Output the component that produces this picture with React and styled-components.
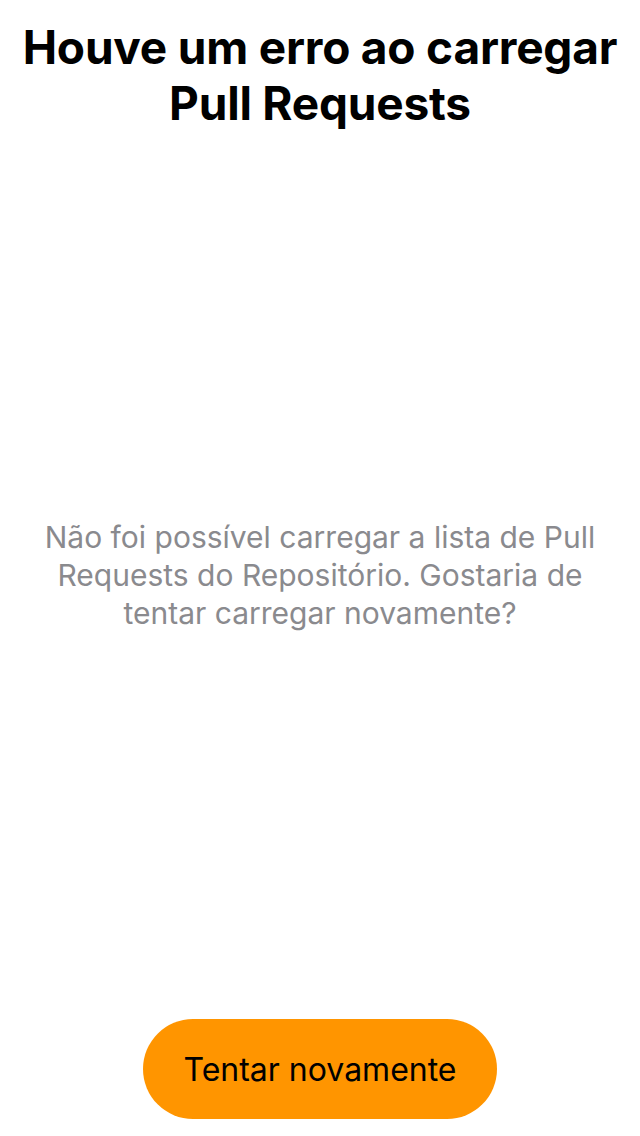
import React from "react";
import styled, { createGlobalStyle } from "styled-components";

const Global = createGlobalStyle`
  html, body { margin: 0; padding: 0; background: #fff; }
  body { font-family: Inter, "Liberation Sans", sans-serif; -webkit-font-smoothing: antialiased; }
`;

const Screen = styled.div`
  height: 1136px;
  display: flex;
  flex-direction: column;
  align-items: center;
  box-sizing: border-box;
  padding: 19px 16px 17px;
`;

const Title = styled.h1`
  margin: 0;
  font-size: 46px;
  line-height: 56px;
  font-weight: 700;
  color: #000;
  text-align: center;
  letter-spacing: -0.2px;
`;

const Middle = styled.div`
  flex: 1;
  display: flex;
  align-items: center;
  justify-content: center;
`;

const Message = styled.p`
  margin: 0;
  max-width: 580px;
  font-size: 30px;
  line-height: 38px;
  color: #8a8a8e;
  text-align: center;
  font-weight: 400;
`;

const RetryButton = styled.button`
  width: 354px;
  height: 100px;
  border: none;
  border-radius: 50px;
  background: #ff9500;
  color: #000;
  font-family: inherit;
  font-size: 32px;
  font-weight: 400;
  cursor: pointer;
`;

export default function App() {
  return (
    <>
      <Global />
      <Screen>
        <Title>Houve um erro ao carregar<br />Pull Requests</Title>
        <Middle>
          <Message>
            Não foi possível carregar a lista de Pull Requests do Repositório. Gostaria de tentar carregar novamente?
          </Message>
        </Middle>
        <RetryButton>Tentar novamente</RetryButton>
      </Screen>
    </>
  );
}
